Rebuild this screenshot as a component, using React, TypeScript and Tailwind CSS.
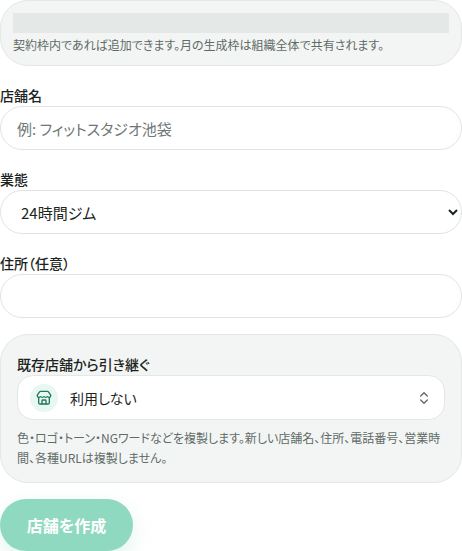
import { ChevronsUpDown, Store } from 'lucide-react';

const FONT = 'font-["Noto_Sans_CJK_JP","Noto_Sans",sans-serif] [font-feature-settings:"palt"]';

export default function App() {
  return (
    <div className={`${FONT} w-[462px] h-[551px] overflow-hidden bg-white text-[#1c2421]`}>
      <div className="h-[66px] rounded-[28px] border border-[#e3e7e6] bg-[#f3f5f4] px-3 pt-3">
        <div className="h-5 bg-[#e4e9e7]" />
        <p className="mt-[2px] text-xs leading-[20px] text-[#5f6b67]">契約枠内であれば追加できます。月の生成枠は組織全体で共有されます。</p>
      </div>

      <label className="mt-5 block text-sm font-medium leading-[18px] pb-[2px]">店舗名</label>
      <input
        placeholder="例: フィットスタジオ池袋"
        className="block h-11 w-full rounded-[22px] border border-[#e0e5e4] bg-white px-4 text-[15px] outline-none placeholder:text-[#6f7876]"
      />

      <label className="mt-5 block text-sm font-medium leading-[18px] pb-[2px]">業態</label>
      <select className="block h-11 w-full rounded-[22px] border border-[#e0e5e4] bg-white px-4 text-[15px] outline-none">
        <option>24時間ジム</option>
      </select>

      <label className="mt-5 block text-sm font-medium leading-[18px] pb-[2px]">住所（任意）</label>
      <input className="block h-11 w-full rounded-[22px] border border-[#e0e5e4] bg-white px-4 text-[15px] outline-none" />

      <div className="mt-4 h-[149px] rounded-[28px] border border-[#e3e7e6] bg-[#f3f5f4] px-4 pt-[19px]">
        <div className="text-sm font-medium leading-5">既存店舗から引き継ぐ</div>
        <div className="mt-[1px] flex h-[45px] items-center rounded-2xl border border-[#e3e7e6] bg-white pl-3 pr-3">
          <span className="flex h-7 w-7 items-center justify-center rounded-full bg-[#e9f7f2]">
            <Store size={16} className="text-[#1f7a5c]" />
          </span>
          <span className="ml-3 flex-1 text-sm">利用しない</span>
          <ChevronsUpDown size={16} className="text-[#5f6b67]" />
        </div>
        <p className="mt-2 text-xs leading-[20px] text-[#5f6b67]">色・ロゴ・トーン・NGワードなどを複製します。新しい店舗名、住所、電話番号、営業時間、各種URLは複製しません。</p>
      </div>

      <button className="mt-4 h-[52px] w-[133px] rounded-[26px] bg-[#8fd9c1] text-base font-bold text-white shadow-[0_8px_20px_rgba(143,217,193,0.25)]">
        店舗を作成
      </button>
    </div>
  );
}
